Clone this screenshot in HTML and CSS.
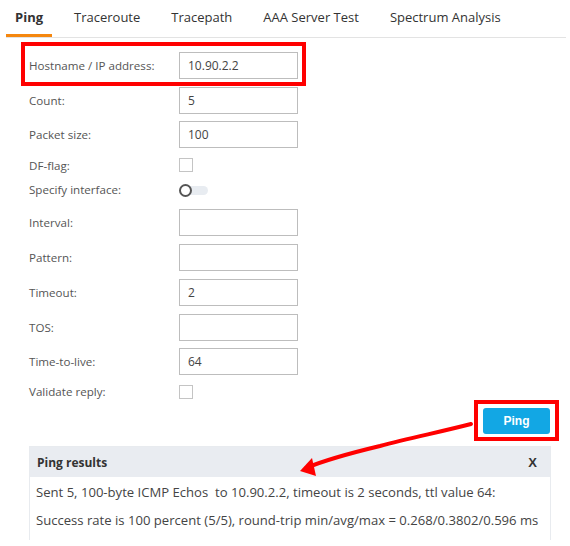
FILE: index.html
```html
<!DOCTYPE html>
<html lang="en">
<head>
  <meta charset="UTF-8" />
  <title>Ping</title>
  <link rel="stylesheet" href="styles.css">
</head>
<body>
  <div class="tabs">
    <div class="tab active">Ping</div>
    <div class="tab">Traceroute</div>
    <div class="tab">Tracepath</div>
    <div class="tab">AAA Server Test</div>
    <div class="tab">Spectrum Analysis</div>
  </div>

  <div class="form">
    <div class="row">
      <label>Hostname / IP address:</label>
      <input type="text" value="10.90.2.2">
    </div>
    <div class="row">
      <label>Count:</label>
      <input type="text" value="5">
    </div>
    <div class="row short">
      <label>Packet size:</label>
      <input type="text" value="100">
    </div>
    <div class="row check">
      <label>DF-flag:</label>
      <span class="box"></span>
    </div>
    <div class="row toggle-row">
      <label>Specify interface:</label>
      <span class="toggle"><span class="knob"></span></span>
    </div>
    <div class="row spaced">
      <label>Interval:</label>
      <input type="text" value="">
    </div>
    <div class="row">
      <label>Pattern:</label>
      <input type="text" value="">
    </div>
    <div class="row">
      <label>Timeout:</label>
      <input type="text" value="2">
    </div>
    <div class="row">
      <label>TOS:</label>
      <input type="text" value="">
    </div>
    <div class="row short">
      <label>Time-to-live:</label>
      <input type="text" value="64">
    </div>
    <div class="row check last">
      <label>Validate reply:</label>
      <span class="box"></span>
    </div>

    <div class="actions">
      <button class="ping-btn">Ping</button>
    </div>

    <div class="results">
      <div class="results-head">
        <span>Ping results</span>
        <span class="close">X</span>
      </div>
      <div class="results-body">
        <p>Sent 5, 100-byte ICMP Echos&nbsp; to 10.90.2.2, timeout is 2 seconds, ttl value 64:</p>
        <p>Success rate is 100 percent (5/5), round-trip min/avg/max = 0.268/0.3802/0.596 ms</p>
      </div>
    </div>
  </div>

  <!-- annotations -->
  <div class="mark mark-host"></div>
  <div class="mark mark-btn"></div>
  <svg class="arrow" width="570" height="546" viewBox="0 0 570 546">
    <path d="M471 424 C 440 432, 410 438, 380 446 C 355 452, 330 458, 306 468" fill="none" stroke="#f00" stroke-width="4" stroke-linecap="round"/>
    <polygon points="300,471 312,458 316,476" fill="#f00"/>
  </svg>
</body>
</html>
```

FILE: styles.css
```css
body {
  margin: 0;
  font-family: "Open Sans", Arial, sans-serif;
  color: #444;
  background: #fff;
  position: relative;
}

.tabs {
  display: flex;
  gap: 13px;
  margin: 0 4px 0 6px;
  border-bottom: 1px solid #e3e3e3;
  height: 37px;
}

.tab {
  padding: 0 9px;
  font-size: 13px;
  line-height: 34px;
  color: #333;
  border-bottom: 3px solid transparent;
}

.tab.active {
  font-weight: bold;
  border-bottom-color: #f5870f;
}

.form {
  padding: 10px 0 0 29px;
  width: 522px;
}

.row {
  display: flex;
  align-items: center;
  height: 35px;
}

.row.short { height: 33px; }
.row.check { height: 28px; }
.row.toggle-row { height: 21px; }
.row.spaced { margin-top: 5px; }
.row.last { height: 27px; }

.row label {
  width: 150px;
  font-size: 11.6px;
  color: #555;
}

.row input {
  box-sizing: border-box;
  width: 119px;
  height: 27px;
  border: 1px solid #bdbdbd;
  padding: 0 8px;
  font-family: inherit;
  font-size: 12px;
  color: #444;
  outline: none;
}

.box {
  width: 12px;
  height: 12px;
  border: 1px solid #c4c4c4;
  background: #fff;
}

.toggle {
  position: relative;
  width: 29px;
  height: 12px;
}

.toggle::before {
  content: "";
  position: absolute;
  left: 4px;
  right: 0;
  top: 2px;
  height: 9px;
  border-radius: 5px;
  background: #e8ecf1;
}

.knob {
  position: absolute;
  left: 0;
  top: 0;
  width: 9px;
  height: 9px;
  border: 2px solid #555;
  border-radius: 50%;
  background: #fff;
}

.actions {
  display: flex;
  justify-content: flex-end;
  margin-top: 3px;
}

.ping-btn {
  width: 67px;
  height: 26px;
  border: none;
  border-radius: 3px;
  background: #12a7e4;
  color: #fff;
  font-family: "Liberation Sans", Arial, sans-serif;
  font-weight: bold;
  font-size: 12px;
  margin-right: 1px;
}

.results {
  margin-top: 12px;
  border: 1px solid #e8ebef;
  border-bottom: none;
}

.results-head {
  display: flex;
  justify-content: space-between;
  align-items: center;
  height: 30px;
  padding: 0 13px 0 7px;
  background: #e9ecf1;
  font-size: 12px;
  font-weight: bold;
  color: #333;
}

.results-head .close {
  font-family: "Liberation Sans", Arial, sans-serif;
  font-size: 13px;
}

.results-body {
  padding: 1px 6px 6px;
}

.results-body p {
  margin: 0;
  font-size: 13.1px;
  line-height: 28px;
  color: #444;
  white-space: nowrap;
}

.mark {
  position: absolute;
  border: 4px solid #f00;
  box-sizing: border-box;
}

.mark-host {
  left: 21px;
  top: 42px;
  width: 285px;
  height: 44px;
}

.mark-btn {
  left: 474px;
  top: 400px;
  width: 85px;
  height: 41px;
}

.arrow {
  position: absolute;
  left: 0;
  top: 0;
  pointer-events: none;
}
```
